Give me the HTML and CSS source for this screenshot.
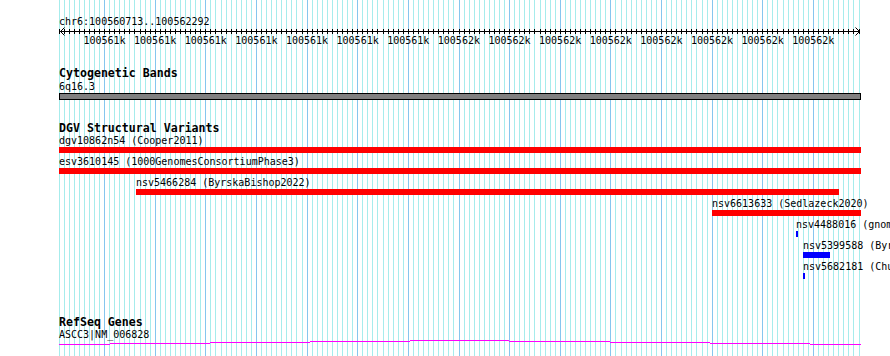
FILE: index.html
```html
<!DOCTYPE html>
<html lang="en">
<head>
    <meta charset="UTF-8">
    <title>chr6:100560713..100562292</title>
    <link rel="stylesheet" href="styles.css">
</head>
<body>
    <div class="panel">
        <svg class="grid" id="grid" width="890" height="356"></svg>

        <div class="ruler">
            <div class="label">chr6:100560713..100562292</div>
            <svg class="axis" id="axis" width="890" height="6"></svg>
            <div class="scale">
                <span>100561k</span><span>100561k</span><span>100561k</span><span>100561k</span>
                <span>100561k</span><span>100561k</span><span>100561k</span>
                <span>100562k</span><span>100562k</span><span>100562k</span><span>100562k</span>
                <span>100562k</span><span>100562k</span><span>100562k</span><span>100562k</span>
            </div>
        </div>

        <div class="track cyto">
            <div class="track-title">Cytogenetic Bands</div>
            <div class="label">6q16.3</div>
            <div class="band"></div>
        </div>

        <div class="track dgv">
            <div class="track-title">DGV Structural Variants</div>
            <div class="feature" style="margin-left:59px">
                <div class="label">dgv10862n54 (Cooper2011)</div>
                <div class="bar red" style="width:802px"></div>
            </div>
            <div class="feature" style="margin-left:59px">
                <div class="label">esv3610145 (1000GenomesConsortiumPhase3)</div>
                <div class="bar red" style="width:802px"></div>
            </div>
            <div class="feature" style="margin-left:136px">
                <div class="label">nsv5466284 (ByrskaBishop2022)</div>
                <div class="bar red" style="width:703px"></div>
            </div>
            <div class="feature" style="margin-left:712px">
                <div class="label">nsv6613633 (Sedlazeck2020)</div>
                <div class="bar red" style="width:149px"></div>
            </div>
            <div class="feature" style="margin-left:796px">
                <div class="label">nsv4488016 (gnomAD)</div>
                <div class="bar blue" style="width:2px"></div>
            </div>
            <div class="feature" style="margin-left:803px">
                <div class="label">nsv5399588 (ByrskaBishop2022)</div>
                <div class="bar blue" style="width:27px"></div>
            </div>
            <div class="feature" style="margin-left:803px">
                <div class="label">nsv5682181 (Chua2022)</div>
                <div class="bar blue" style="width:2px"></div>
            </div>
        </div>

        <div class="track refseq">
            <div class="track-title">RefSeq Genes</div>
            <div class="label">ASCC3|NM_006828</div>
            <svg class="gene" width="890" height="6" shape-rendering="crispEdges">
                <rect x="59" y="5" width="51" height="1" />
                <rect x="110" y="4" width="100" height="1" />
                <rect x="210" y="3" width="100" height="1" />
                <rect x="310" y="2" width="100" height="1" />
                <rect x="410" y="1" width="99" height="1" />
                <rect x="509" y="2" width="101" height="1" />
                <rect x="610" y="3" width="100" height="1" />
                <rect x="710" y="4" width="100" height="1" />
                <rect x="810" y="5" width="51" height="1" />
            </svg>
        </div>
    </div>

    <script>
    const NS = 'http://www.w3.org/2000/svg';
    const X0 = 59;
    const STEP = 800 / 158;

    function addRect(svg, x, y, w, h, cls) {
        let r = document.createElementNS(NS, 'rect');
        r.setAttribute('x', x);
        r.setAttribute('y', y);
        r.setAttribute('width', w);
        r.setAttribute('height', h);
        if (cls) r.setAttribute('class', cls);
        svg.appendChild(r);
    }

    function addLine(svg, x1, y1, x2, y2) {
        let l = document.createElementNS(NS, 'line');
        l.setAttribute('x1', x1);
        l.setAttribute('y1', y1);
        l.setAttribute('x2', x2);
        l.setAttribute('y2', y2);
        svg.appendChild(l);
    }

    let grid = document.getElementById('grid');
    let axis = document.getElementById('axis');

    // one line every 10 bp, a darker one every 100 bp
    for (let i = 0; i <= 158; i++) {
        let x = X0 + Math.floor(i * STEP);
        addRect(grid, x, 0, 1, 356, i % 10 === 9 ? 'major' : 'minor');
        addRect(axis, x, 1, 1, 5);
    }
    addRect(axis, 60, 3, 800, 1);
    addLine(axis, 60.5, 3.5, 64.5, -0.5);
    addLine(axis, 60.5, 3.5, 64.5, 7.5);
    addLine(axis, 859.5, 3.5, 855.5, -0.5);
    addLine(axis, 859.5, 3.5, 855.5, 7.5);
    </script>
</body>
</html>
```

FILE: styles.css
```css
body {
    margin: 0;
    background-color: #fff;
    color: #000;
    font-family: "DejaVu Sans Mono", "Liberation Mono", monospace;
    font-size: 10px;
    line-height: 13px;
}
.panel {
    position: relative;
    width: 890px;
    height: 356px;
    padding-top: 15px;
    box-sizing: border-box;
    overflow: hidden;
}
.grid {
    position: absolute;
    left: 0;
    top: 0;
}
.grid .minor { fill: #a6ecec; }
.grid .major { fill: #86c6ee; }
.ruler, .track {
    position: relative;
}
.label {
    white-space: nowrap;
}
.ruler > .label,
.track > .label,
.track-title {
    padding-left: 59px;
}
.axis {
    display: block;
    overflow: visible;
    shape-rendering: crispEdges;
}
.axis rect { fill: #000; }
.axis line { stroke: #000; stroke-width: 1; shape-rendering: auto; }
.scale {
    display: flex;
    padding-left: 79.2px;
    white-space: nowrap;
}
.scale span {
    flex: none;
    width: 50.633px;
    text-align: center;
}
.track-title {
    font-weight: bold;
    font-size: 11.6px;
    line-height: 12px;
    white-space: nowrap;
}
.cyto { margin-top: 20px; }
.cyto > .label { margin-top: 1px; }
.band {
    margin-left: 59px;
    width: 802px;
    height: 7px;
    box-sizing: border-box;
    border: 1px solid #000;
    background-color: #808080;
}
.dgv { margin-top: 22px; }
.feature { margin-bottom: 2px; }
.bar { height: 6px; }
.bar.red { background-color: #ff0000; }
.bar.blue { background-color: #0000ff; }
.refseq { margin-top: 37px; }
.gene {
    display: block;
    margin-top: -2px;
    fill: #ff00ff;
}
```
